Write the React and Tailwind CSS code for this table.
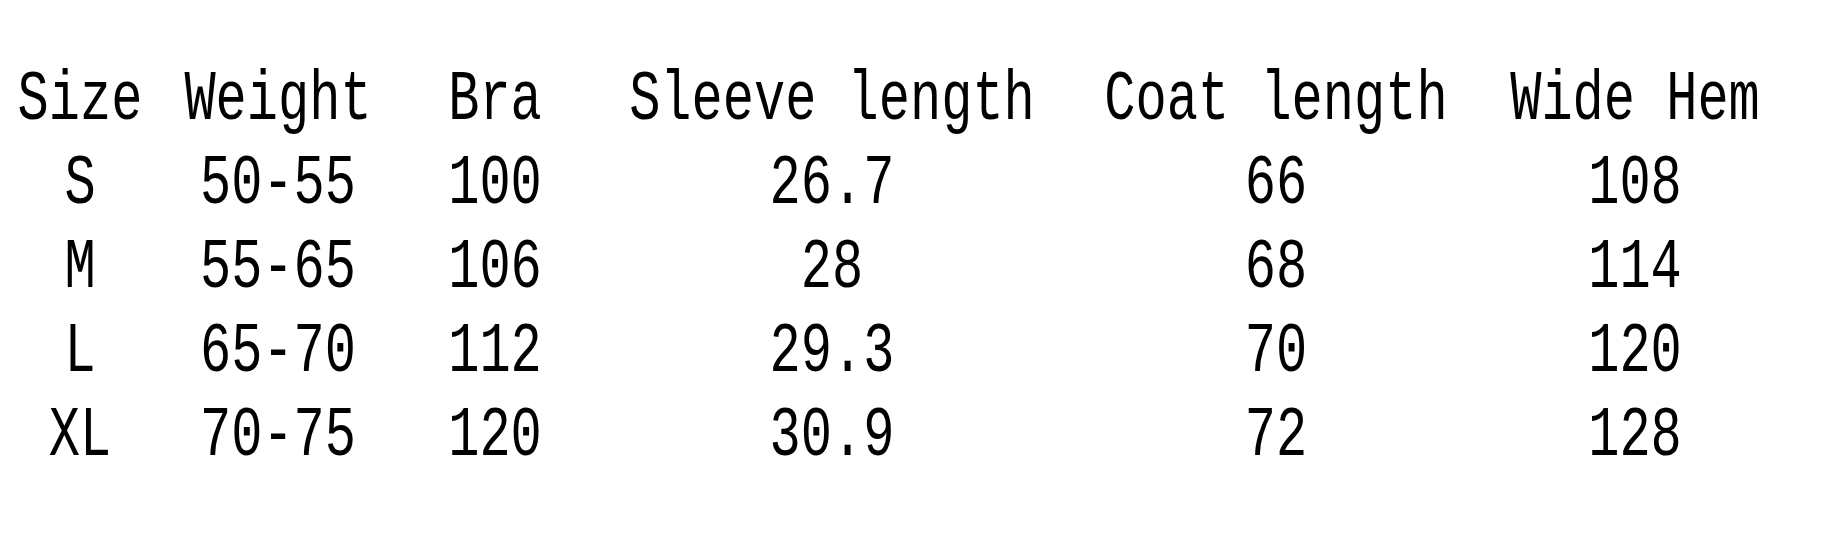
import React from "react";

const HEADERS = ["Size", "Weight", "Bra", "Sleeve length", "Coat length", "Wide Hem"];

const ROWS = [
  ["S", "50-55", "100", "26.7", "66", "108"],
  ["M", "55-65", "106", "28", "68", "114"],
  ["L", "65-70", "112", "29.3", "70", "120"],
  ["XL", "70-75", "120", "30.9", "72", "128"],
];

function Row({ cells }) {
  return (
    <div className="grid h-[84px] grid-cols-[160px_236px_198px_476px_412px_306px] leading-[84px]">
      {cells.map((cell, i) => (
        <div key={i} className="text-center whitespace-pre">
          <span className="inline-block scale-y-[1.35]">{cell}</span>
        </div>
      ))}
    </div>
  );
}

export default function App() {
  return (
    <div className="h-[553px] w-[1824px] bg-white pt-[59px] font-['Liberation_Mono',monospace] text-[52px] font-normal text-black">
      <Row cells={HEADERS} />
      {ROWS.map((row) => (
        <Row key={row[0]} cells={row} />
      ))}
    </div>
  );
}
